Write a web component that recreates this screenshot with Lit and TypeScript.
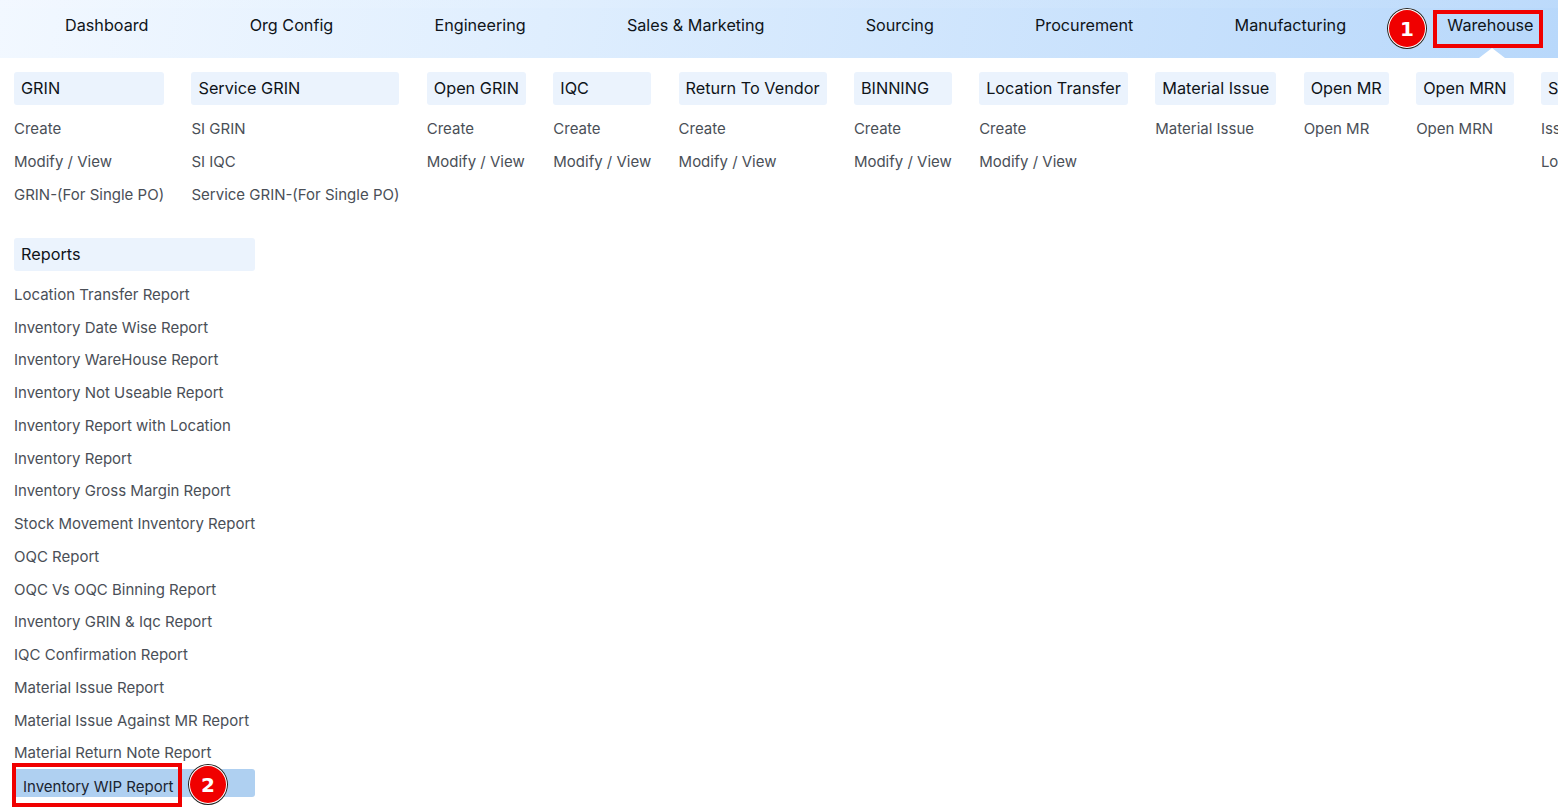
import { LitElement, html, css } from "lit";
import { customElement } from "lit/decorators.js";

const navItems = ["Dashboard", "Org Config", "Engineering", "Sales & Marketing", "Sourcing", "Procurement", "Manufacturing", "Warehouse"];
const cols: { title: string; links: string[] }[] = [
  { title: "GRIN", links: ["Create", "Modify / View", "GRIN-(For Single PO)"] },
  { title: "Service GRIN", links: ["SI GRIN", "SI IQC", "Service GRIN-(For Single PO)"] },
  { title: "Open GRIN", links: ["Create", "Modify / View"] },
  { title: "IQC", links: ["Create", "Modify / View"] },
  { title: "Return To Vendor", links: ["Create", "Modify / View"] },
  { title: "BINNING", links: ["Create", "Modify / View"] },
  { title: "Location Transfer", links: ["Create", "Modify / View"] },
  { title: "Material Issue", links: ["Material Issue"] },
  { title: "Open MR", links: ["Open MR"] },
  { title: "Open MRN", links: ["Open MRN"] },
  { title: "Stock Issue", links: ["Issue", "Location"] },
];
const reports = [
  "Location Transfer Report", "Inventory Date Wise Report", "Inventory WareHouse Report", "Inventory Not Useable Report",
  "Inventory Report with Location", "Inventory Report", "Inventory Gross Margin Report", "Stock Movement Inventory Report",
  "OQC Report", "OQC Vs OQC Binning Report", "Inventory GRIN & Iqc Report", "IQC Confirmation Report",
  "Material Issue Report", "Material Issue Against MR Report", "Material Return Note Report",
];

@customElement("app-root")
export class AppRoot extends LitElement {
  static styles = css`
    :host { display: block; position: relative; width: 1558px; height: 811px; overflow: hidden; background: #fff;
      font-family: Inter, "Noto Sans", sans-serif; color: #111; }
    nav { display: flex; height: 58px; box-sizing: border-box; padding: 0 0 9px 51px; gap: 73.15px; align-items: center;
      background: linear-gradient(rgba(255, 255, 255, 0.06) 8px, transparent 8px),
        linear-gradient(100deg, #f2f8ff 0%, #dfeefe 35%, #b8d8fb 100%);
      position: relative; white-space: nowrap; }
    nav a { padding: 0 14px; font-size: 16.2px; line-height: 24px; color: #0f1419; }
    .notch { position: absolute; left: 1479px; top: 48px; width: 0; height: 0; border-left: 13px solid transparent;
      border-right: 13px solid transparent; border-bottom: 10px solid #fff; }
    .menu { padding: 14px 0 0 14px; display: flex; flex-direction: column; gap: 27.55px; }
    .row { display: flex; gap: 27.35px; white-space: nowrap; }
    .col { display: flex; flex-direction: column; flex: none; }
    .head { height: 33px; box-sizing: border-box; padding: 0 7px 2px; display: flex; align-items: center; background: #ebf3fd;
      border-radius: 3px; font-size: 16.25px; color: #0f1419; margin-bottom: 7.3px; }
    .head.reports { margin-bottom: 6.8px; }
    .link { height: 32.75px; display: flex; align-items: center; font-size: 15px; color: #4a4f57; }
    .link.on { height: 28px; box-sizing: border-box; padding: 6px 0 0 9px; background: #afd0f1;
      border-radius: 0 3px 3px 0; color: #1a2430; }
    .box { position: absolute; border: 4px solid #f00000; box-sizing: border-box; pointer-events: none; }
    .box.a { left: 1433px; top: 10px; width: 110px; height: 38px; }
    .box.b { left: 12px; top: 763px; width: 170px; height: 44px; }
    .badge { position: absolute; width: 40px; height: 41px; box-sizing: border-box; border-radius: 50%; background: #f00000;
      border: 2px solid #fff; outline: 1px solid #222; outline-offset: -1px; color: #fff;
      font: bold 20px/39px "DejaVu Sans", sans-serif; text-align: center; }
    .badge.a { left: 1387px; top: 8px; }
    .badge.b { left: 188px; top: 764px; }
  `;

  private col(title: string, links: string[]) {
    return html`<div class="col"><div class="head">${title}</div>${links.map((l) => html`<div class="link">${l}</div>`)}</div>`;
  }

  render() {
    return html`
      <nav>${navItems.map((n) => html`<a>${n}</a>`)}<span class="notch"></span></nav>
      <div class="menu">
        <div class="row">${cols.map((c) => this.col(c.title, c.links))}</div>
        <div class="row">
          <div class="col">
            <div class="head reports">Reports</div>
            ${reports.map((l) => html`<div class="link">${l}</div>`)}
            <div class="link on">Inventory WIP Report</div>
          </div>
        </div>
      </div>
      <div class="box a"></div>
      <div class="box b"></div>
      <div class="badge a">1</div>
      <div class="badge b">2</div>
    `;
  }
}
